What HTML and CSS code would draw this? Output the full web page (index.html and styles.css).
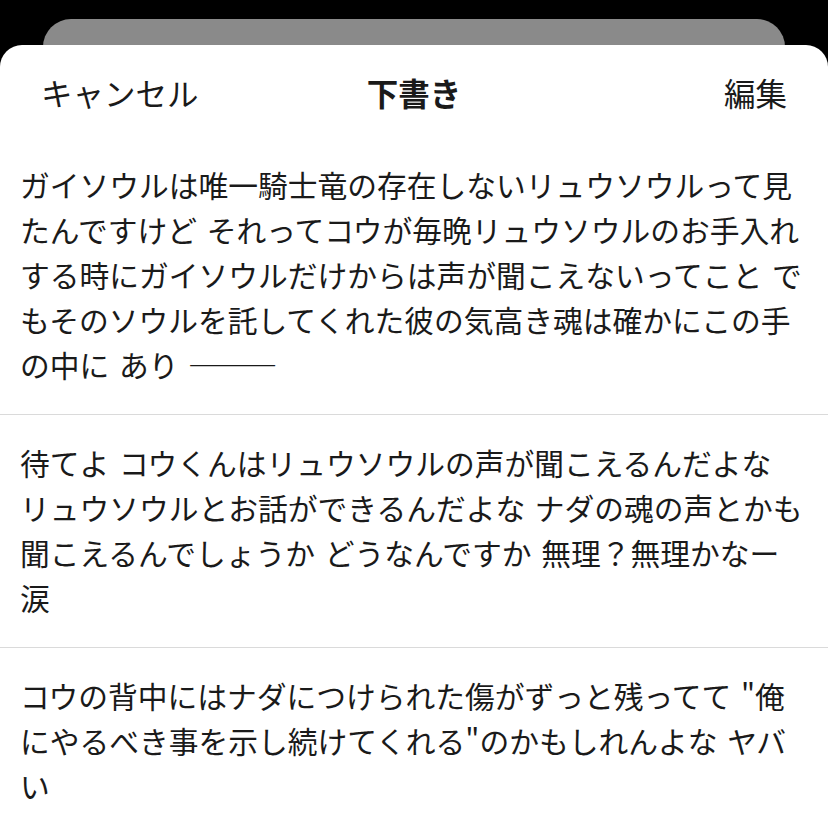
FILE: index.html
```html
<!DOCTYPE html>
<html lang="ja">
<head>
    <meta charset="UTF-8">
    <meta name="viewport" content="width=device-width, initial-scale=1.0">
    <title>下書き</title>
    <link rel="stylesheet" href="styles.css">
</head>
<body>
    <div class="behind-card"></div>

    <div class="sheet">
        <header class="sheet-header">
            <span class="header-btn cancel">キャンセル</span>
            <h1 class="sheet-title">下書き</h1>
            <span class="header-btn edit">編集</span>
        </header>

        <ul class="drafts">
            <li class="draft">ガイソウルは唯一騎士竜の存在しないリュウソウルって見たんですけど それってコウが毎晩リュウソウルのお手入れする時にガイソウルだけからは声が聞こえないってこと でもそのソウルを託してくれた彼の気高き魂は確かにこの手の中に あり ———</li>
            <li class="draft">待てよ コウくんはリュウソウルの声が聞こえるんだよな<br>リュウソウルとお話ができるんだよな ナダの魂の声とかも聞こえるんでしょうか どうなんですか 無理？無理かなー涙</li>
            <li class="draft">コウの背中にはナダにつけられた傷がずっと残ってて "俺にやるべき事を示し続けてくれる"のかもしれんよな ヤバい</li>
        </ul>
    </div>
</body>
</html>
```

FILE: styles.css
```css
body {
    margin: 0;
    padding-top: 19px;
    background-color: #000;
    font-family: "Noto Sans CJK JP", "Noto Sans", sans-serif;
    color: #1a1a1a;
    overflow: hidden;
}
.behind-card {
    height: 60px;
    margin: 0 43px -34px 43px;
    background-color: #8a8a8a;
    border-radius: 28px 28px 0 0;
}
.sheet {
    position: relative;
    min-height: calc(100vh - 45px);
    background-color: #fff;
    border-radius: 22px 22px 0 0;
}
.sheet-header {
    display: grid;
    grid-template-columns: 1fr auto 1fr;
    align-items: center;
    height: 92px;
    box-sizing: border-box;
    padding: 1px 41px 0 41px;
}
.header-btn {
    font-size: 31.5px;
    line-height: 40px;
}
.edit {
    justify-self: end;
}
.sheet-title {
    margin: 0;
    font-size: 31.5px;
    line-height: 40px;
    font-weight: 700;
}
.drafts {
    list-style: none;
    margin: 0;
    padding: 0;
}
.draft {
    padding: 25px 25px 27px 20px;
    font-size: 29.75px;
    line-height: 45px;
    word-spacing: 3px;
    border-bottom: 1px solid #dadada;
}
.draft:last-child {
    border-bottom: none;
}
```
